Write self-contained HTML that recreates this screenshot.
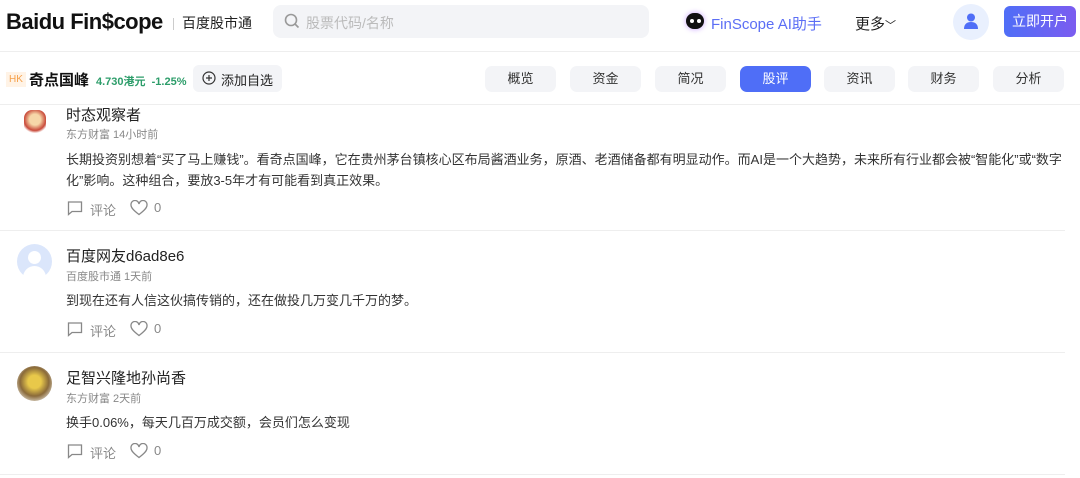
<!DOCTYPE html>
<html><head><meta charset="utf-8"><style>
*{margin:0;padding:0;box-sizing:border-box}
body{width:1080px;height:478px;overflow:hidden;background:#fff;font-family:"Liberation Sans","Noto Sans CJK SC",sans-serif;color:#222;position:relative}
.a{position:absolute;white-space:nowrap}
.tab{position:absolute;top:66px;height:26px;width:71px;border-radius:7px;background:#f3f4f7;font-size:13px;color:#333;text-align:center;line-height:26px}
.tab.on{background:#4f6ef7;color:#fff}
.name{font-size:15px;color:#222}
.meta{font-size:11px;color:#888}
.txt{font-size:13px;color:#333;line-height:21px}
.act{font-size:13px;color:#888}
.hr{position:absolute;left:0;width:1065px;height:1px;background:#eee}
</style></head><body>
<div class="a" style="left:6px;top:9px;font-size:22px;font-weight:bold;letter-spacing:-0.5px;color:#111">Baidu Fin$cope</div>
<div class="a" style="left:173px;top:18px;width:1px;height:12px;background:#ccc"></div>
<div class="a" style="left:182px;top:13px;font-size:14px;color:#222">百度股市通</div>
<div class="a" style="left:273px;top:5px;width:376px;height:33px;background:#f3f4f7;border-radius:8px"></div>
<svg class="a" style="left:284px;top:13px" width="16" height="16" viewBox="0 0 16 16"><circle cx="7" cy="7" r="5.5" fill="none" stroke="#999" stroke-width="1.6"/><path d="M11 11l3.5 3.5" stroke="#999" stroke-width="1.6"/></svg>
<div class="a" style="left:306px;top:13px;font-size:14px;color:#bbb">股票代码/名称</div>
<div class="a" style="left:686px;top:13px;width:18px;height:16px;border-radius:8px;background:#111;box-shadow:0 0 6px #c8a0ff"></div>
<div class="a" style="left:690px;top:19px;width:4px;height:4px;border-radius:2px;background:#fff"></div>
<div class="a" style="left:697px;top:19px;width:4px;height:4px;border-radius:2px;background:#fff"></div>
<div class="a" style="left:711px;top:13px;font-size:15px;color:#5b6ef5">FinScope AI助手</div>
<div class="a" style="left:855px;top:13px;font-size:15px;color:#222">更多<span style="font-size:11px">﹀</span></div>
<div class="a" style="left:953px;top:4px;width:36px;height:36px;border-radius:18px;background:#e9f0fe"></div>
<svg class="a" style="left:962px;top:12px" width="18" height="18" viewBox="0 0 18 18"><circle cx="9" cy="5.5" r="4" fill="#4f6ef7"/><path d="M2 17c0-5 3-7 7-7s7 2 7 7z" fill="#4f6ef7"/></svg>
<div class="a" style="left:1004px;top:6px;width:72px;height:31px;border-radius:6px;background:linear-gradient(90deg,#4f6ef7,#7b5cf0);color:#fff;font-size:14px;text-align:center;line-height:31px">立即开户</div>
<div class="hr" style="top:51px;width:1080px"></div>
<div class="a" style="left:6px;top:72px;width:20px;height:15px;background:#fff3e6;color:#f5a04a;font-size:10px;text-align:center;line-height:15px">HK</div>
<div class="a" style="left:29px;top:69px;font-size:15px;font-weight:bold;color:#111">奇点国峰</div>
<div class="a" style="left:96px;top:73px;font-size:11px;color:#2d9d6a;font-weight:bold">4.730港元&nbsp; -1.25%</div>
<div class="a" style="left:193px;top:65px;width:89px;height:27px;background:#f3f4f7;border-radius:6px"></div>
<svg class="a" style="left:202px;top:71px" width="14" height="14" viewBox="0 0 14 14"><circle cx="7" cy="7" r="6" fill="none" stroke="#333" stroke-width="1.2"/><path d="M7 4v6M4 7h6" stroke="#333" stroke-width="1.2"/></svg>
<div class="a" style="left:221px;top:70px;font-size:13px;color:#222">添加自选</div>
<div class="tab" style="left:485px">概览</div><div class="tab" style="left:570px">资金</div><div class="tab" style="left:655px">简况</div><div class="tab on" style="left:740px">股评</div><div class="tab" style="left:824px">资讯</div><div class="tab" style="left:908px">财务</div><div class="tab" style="left:993px">分析</div>
<div class="hr" style="top:104px;width:1080px"></div>

<div class="a" style="left:24px;top:110px;width:22px;height:24px;border-radius:8px;background:radial-gradient(circle at 50% 40%,#f6d7a8 30%,#c94a3a 60%,#fff 75%)"></div>
<div class="a name" style="left:66px;top:104px">时态观察者</div>
<div class="a meta" style="left:66px;top:126px">东方财富 14小时前</div>
<div class="a txt" style="left:66px;top:149px">长期投资别想着“买了马上赚钱”。看奇点国峰，它在贵州茅台镇核心区布局酱酒业务，原酒、老酒储备都有明显动作。而AI是一个大趋势，未来所有行业都会被“智能化”或“数字<br>化”影响。这种组合，要放3-5年才有可能看到真正效果。</div>

<svg class="a" style="left:67px;top:200px" width="16" height="16" viewBox="0 0 16 16"><path d="M1.5 2h13v9.5H5l-3.5 3z" fill="none" stroke="#888" stroke-width="1.3"/></svg>
<div class="a act" style="left:90px;top:200px">评论</div>
<svg class="a" style="left:130px;top:200px" width="18" height="16" viewBox="0 0 18 16"><path d="M9 14.5C3 10 1 7.5 1 5a4 4 0 0 1 8-1 4 4 0 0 1 8 1c0 2.5-2 5-8 9.5z" fill="none" stroke="#888" stroke-width="1.3"/></svg>
<div class="a act" style="left:154px;top:200px">0</div>
<div class="hr" style="top:230px"></div>

<div class="a" style="left:17px;top:244px;width:35px;height:35px;border-radius:18px;background:#dbe6fb"></div>
<div class="a" style="left:28px;top:251px;width:13px;height:13px;border-radius:7px;background:#fff"></div>
<div class="a" style="left:23px;top:266px;width:23px;height:13px;border-radius:12px 12px 0 0;background:#fff"></div>
<div class="a name" style="left:66px;top:245px">百度网友d6ad8e6</div>
<div class="a meta" style="left:66px;top:268px">百度股市通 1天前</div>
<div class="a txt" style="left:66px;top:290px">到现在还有人信这伙搞传销的，还在做投几万变几千万的梦。</div>
<svg class="a" style="left:67px;top:321px" width="16" height="16" viewBox="0 0 16 16"><path d="M1.5 2h13v9.5H5l-3.5 3z" fill="none" stroke="#888" stroke-width="1.3"/></svg>
<div class="a act" style="left:90px;top:321px">评论</div>
<svg class="a" style="left:130px;top:321px" width="18" height="16" viewBox="0 0 18 16"><path d="M9 14.5C3 10 1 7.5 1 5a4 4 0 0 1 8-1 4 4 0 0 1 8 1c0 2.5-2 5-8 9.5z" fill="none" stroke="#888" stroke-width="1.3"/></svg>
<div class="a act" style="left:154px;top:321px">0</div>
<div class="hr" style="top:352px"></div>

<div class="a" style="left:17px;top:366px;width:35px;height:35px;border-radius:18px;background:radial-gradient(circle at 50% 45%,#e8c84a 25%,#8a6a3a 55%,#d8cfc0 80%)"></div>
<div class="a name" style="left:66px;top:367px">足智兴隆地孙尚香</div>
<div class="a meta" style="left:66px;top:390px">东方财富 2天前</div>
<div class="a txt" style="left:66px;top:412px">换手0.06%，每天几百万成交额，会员们怎么变现</div>
<svg class="a" style="left:67px;top:443px" width="16" height="16" viewBox="0 0 16 16"><path d="M1.5 2h13v9.5H5l-3.5 3z" fill="none" stroke="#888" stroke-width="1.3"/></svg>
<div class="a act" style="left:90px;top:443px">评论</div>
<svg class="a" style="left:130px;top:443px" width="18" height="16" viewBox="0 0 18 16"><path d="M9 14.5C3 10 1 7.5 1 5a4 4 0 0 1 8-1 4 4 0 0 1 8 1c0 2.5-2 5-8 9.5z" fill="none" stroke="#888" stroke-width="1.3"/></svg>
<div class="a act" style="left:154px;top:443px">0</div>
<div class="hr" style="top:474px"></div>
</body></html>
